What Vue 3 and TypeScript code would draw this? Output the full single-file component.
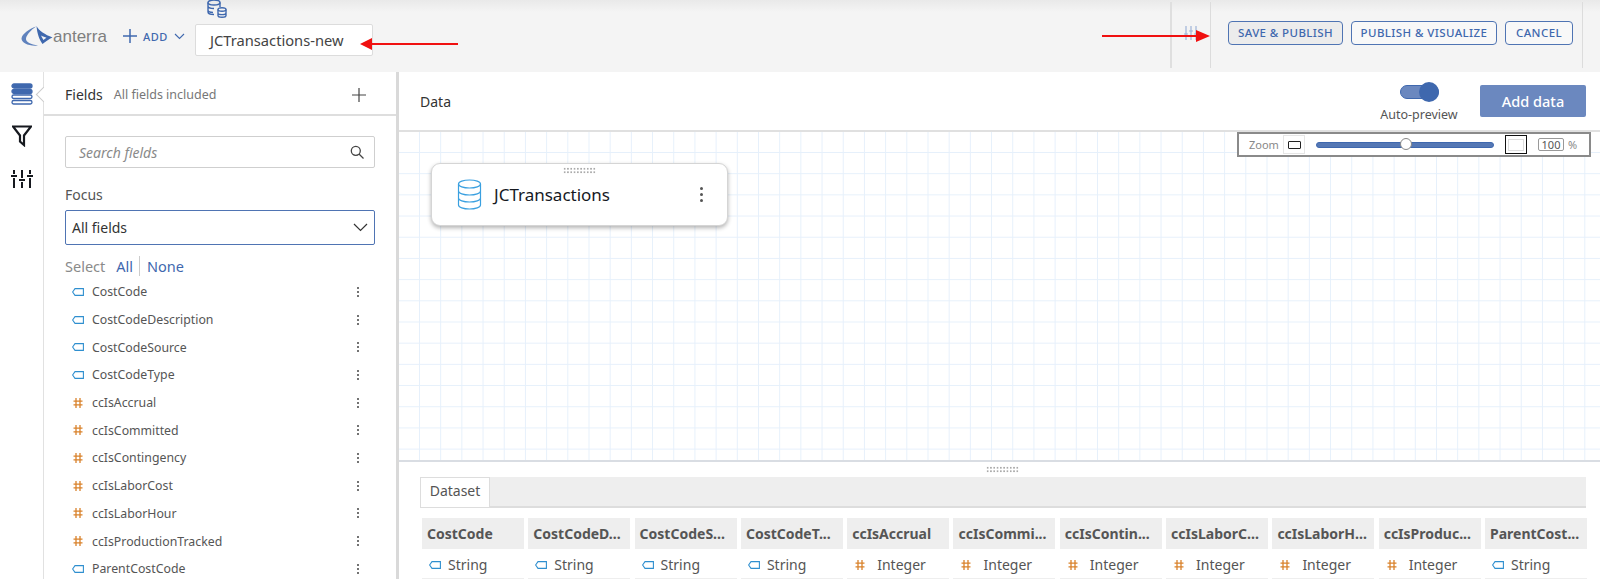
<script setup lang="ts">
interface Field { name: string; kind: 'text' | 'num' }
interface Col { head: string; kind: 'text' | 'num' }

const fields: Field[] = [
  { name: 'CostCode', kind: 'text' },
  { name: 'CostCodeDescription', kind: 'text' },
  { name: 'CostCodeSource', kind: 'text' },
  { name: 'CostCodeType', kind: 'text' },
  { name: 'ccIsAccrual', kind: 'num' },
  { name: 'ccIsCommitted', kind: 'num' },
  { name: 'ccIsContingency', kind: 'num' },
  { name: 'ccIsLaborCost', kind: 'num' },
  { name: 'ccIsLaborHour', kind: 'num' },
  { name: 'ccIsProductionTracked', kind: 'num' },
  { name: 'ParentCostCode', kind: 'text' }
]
const cols: Col[] = [
  { head: 'CostCode', kind: 'text' },
  { head: 'CostCodeD...', kind: 'text' },
  { head: 'CostCodeS...', kind: 'text' },
  { head: 'CostCodeT...', kind: 'text' },
  { head: 'ccIsAccrual', kind: 'num' },
  { head: 'ccIsCommi...', kind: 'num' },
  { head: 'ccIsContin...', kind: 'num' },
  { head: 'ccIsLaborC...', kind: 'num' },
  { head: 'ccIsLaborH...', kind: 'num' },
  { head: 'ccIsProduc...', kind: 'num' },
  { head: 'ParentCost...', kind: 'text' }
]
</script>

<template>
  <div class="app">
    <header class="top">
      <div class="logo">
        <svg width="32" height="21" viewBox="0 0 32 21">
          <path d="M15 .5 C8 3 1 8 .5 12.500 C.5 17 8 20.500 17 19.500 C10 18.500 4.500 16 5 12.500 C5.500 9 10 4 15 .5Z" fill="#5f82bd" />
          <path d="M15.500 0 C18 5 24 8.500 31.500 11.500 C28 13 24.500 15.500 21.500 18 C18.500 14 16 7 15.500 0Z" fill="#3f68ae" />
          <path d="M20 9.500 C22 10.500 24 11.200 25.500 11.700 C24.500 12.300 23.500 13 22.500 14 C21.500 12.700 20.700 11 20 9.500Z" fill="#f4f4f4" />
        </svg>
        <span class="logo-text">anterra</span>
      </div>
      <div class="add">
        <svg width="16" height="16" viewBox="0 0 16 16"><path d="M8 1v14M1 8h14" stroke="#3f68ae" stroke-width="1.500" fill="none" /></svg>
        <span>ADD</span>
        <svg width="11" height="7" viewBox="0 0 11 7"><path d="M1 1l4.500 4.500L10 1" stroke="#3f68ae" stroke-width="1.100" fill="none" /></svg>
      </div>
      <div class="name-wrap">
        <svg class="name-db" width="20" height="18" viewBox="0 0 20 18" fill="none" stroke="#3f68ae" stroke-width="1.400">
          <ellipse cx="7" cy="2.500" rx="6" ry="2.500" />
          <path d="M1 2.500v9.500c0 1.300 2.500 2.500 6 2.500M13 2.500V7M1 6c0 1.300 2.500 2.500 6 2.500M1 10c0 1.300 2.500 2.400 5 2.500" />
          <ellipse cx="15" cy="9.500" rx="4" ry="1.800" />
          <path d="M11 9.500v6c0 1 1.800 1.800 4 1.800s4-.8 4-1.800v-6M11 13c0 1 1.800 1.600 4 1.600s4-.6 4-1.600" />
        </svg>
        <div class="name-input">JCTransactions-new</div>
      </div>
      <div class="arrow arrow-left"></div>
      <div class="spacer"></div>
      <div class="arrow arrow-right"></div>
      <div class="tool-slot">
        <svg width="14" height="14" viewBox="0 0 14 14" stroke="#9db3d8" stroke-width="1.200" fill="none">
          <path d="M2 0v14M7 0v14M12 0v14M0 8h4M5 5h4M10 8h4" />
        </svg>
      </div>
      <div class="actions">
        <button class="btn save pressed">SAVE &amp; PUBLISH</button>
        <button class="btn visualize">PUBLISH &amp; VISUALIZE</button>
        <button class="btn cancel">CANCEL</button>
      </div>
    </header>

    <div class="body">
      <nav class="rail">
        <svg width="22" height="22" viewBox="0 0 22 22" fill="none" stroke="#3f68ae" stroke-width="1.300">
          <rect x="1" y="1" width="20" height="4" rx="2" fill="#3f68ae" />
          <rect x="1" y="6.500" width="20" height="4" rx="2" fill="#3f68ae" />
          <rect x="1" y="12" width="20" height="3.500" rx="1.700" />
          <rect x="1" y="17.500" width="20" height="3.500" rx="1.700" />
        </svg>
        <svg class="rail-filter" width="20" height="22" viewBox="0 0 20 22" fill="none" stroke="#16191f" stroke-width="2.200">
          <path d="M1 1.500h18l-7 9V20l-4-3.500v-6z" />
        </svg>
        <svg class="rail-sliders" width="22" height="20" viewBox="0 0 22 20" fill="none" stroke="#16191f" stroke-width="2">
          <path d="M3 1v4M3 9v10M11 1v8M11 13v6M19 1v4M19 9v10M0 7h6M8 11h6M16 7h6" />
        </svg>
      </nav>

      <aside class="panel">
        <span class="notch"></span>
        <div class="panel-head">
          <span class="panel-title">Fields</span>
          <span class="panel-sub">All fields included</span>
          <svg class="panel-plus" width="14" height="14" viewBox="0 0 14 14"><path d="M7 0v14M0 7h14" stroke="#444" stroke-width="1.200" /></svg>
        </div>
        <div class="panel-body">
          <div class="search">
            <span>Search fields</span>
            <svg width="14" height="14" viewBox="0 0 14 14" fill="none" stroke="#444" stroke-width="1.300"><circle cx="5.800" cy="5.800" r="4.500" /><path d="M9 9l4.500 4.500" /></svg>
          </div>
          <div class="focus-label">Focus</div>
          <div class="select">
            <span>All fields</span>
            <svg width="15" height="9" viewBox="0 0 15 9" fill="none" stroke="#333" stroke-width="1.200"><path d="M1 1l6.500 6.500L14 1" /></svg>
          </div>
          <div class="pick">
            <span class="pick-label">Select</span>
            <span class="pick-link first">All</span>
            <span class="pick-link">None</span>
          </div>
          <ul class="field-list">
            <li v-for="f in fields" :key="f.name" class="field">
              <svg v-if="f.kind === 'text'" class="ico" width="12" height="8" viewBox="0 0 12 8" fill="none" stroke="#2f8fcf" stroke-width="1.100"><path d="M3 .6h8.400v6.800H3L.6 4z" /></svg>
              <svg v-else class="ico" width="12" height="10" viewBox="0 0 12 10" fill="none" stroke="#d9822b" stroke-width="1.300"><path d="M4 0v10M8 0v10M1.500 3.200h9M1.500 6.800h9" /></svg>
              <span class="field-name">{{ f.name }}</span>
              <span class="kebab"><i></i><i></i><i></i></span>
            </li>
          </ul>
        </div>
      </aside>

      <main class="main">
        <div class="data-bar">
          <span class="data-title">Data</span>
          <div class="preview">
            <div class="toggle"><span class="knob"></span></div>
            <span class="preview-label">Auto-preview</span>
          </div>
          <button class="add-data">Add data</button>
        </div>

        <section class="canvas">
          <div class="zoom-box">
            <span class="zoom-label">Zoom</span>
            <span class="zoom-small"><i></i></span>
            <span class="slider"><span class="slider-knob"></span></span>
            <span class="zoom-big"><i></i></span>
            <span class="zoom-num">100</span>
            <span class="zoom-pct">%</span>
          </div>
          <div class="node">
            <span class="grip"></span>
            <svg width="25" height="31" viewBox="0 0 25 31" fill="none" stroke="#3aa0e0" stroke-width="1.200">
              <ellipse cx="12.500" cy="5" rx="11" ry="4" />
              <path d="M1.500 5v21c0 2.200 5 4 11 4s11-1.800 11-4V5M1.500 12c0 2.200 5 4 11 4s11-1.800 11-4M1.500 19c0 2.200 5 4 11 4s11-1.800 11-4" />
            </svg>
            <span class="node-name">JCTransactions</span>
            <span class="kebab big"><i></i><i></i><i></i></span>
          </div>
        </section>

        <section class="dock">
          <span class="dock-grip"></span>
          <div class="tabs"><span class="tab">Dataset</span></div>
          <div class="table">
            <div v-for="c in cols" :key="c.head" class="col">
              <div class="col-head">{{ c.head }}</div>
              <div class="col-type">
                <svg v-if="c.kind === 'text'" width="12" height="8" viewBox="0 0 12 8" fill="none" stroke="#2f8fcf" stroke-width="1.100"><path d="M3 .6h8.400v6.800H3L.6 4z" /></svg>
                <svg v-else class="hash" width="12" height="10" viewBox="0 0 12 10" fill="none" stroke="#d9822b" stroke-width="1.300"><path d="M4 0v10M8 0v10M1.500 3.200h9M1.500 6.800h9" /></svg>
                <span>{{ c.kind === 'text' ? 'String' : 'Integer' }}</span>
              </div>
              <div class="col-next"></div>
            </div>
          </div>
        </section>
      </main>
    </div>
  </div>
</template>

<style>
html, body { margin: 0; overflow: hidden; background: #fff; }
</style>

<style scoped>
.app {
  width: 1600px;
  height: 579px;
  overflow: hidden;
  display: flex;
  flex-direction: column;
  font-family: "Noto Sans", "Open Sans", sans-serif;
  color: #444;
}
.top {
  height: 72px;
  flex: none;
  display: flex;
  align-items: center;
  position: relative;
  background: linear-gradient(#e9e9e9 0, #f4f4f4 12px);
}
.logo { display: flex; align-items: center; margin-left: 21px; width: 87px; }
.logo svg { flex: none; margin-top: 1px; }
.logo-text {
  font-family: "Liberation Sans", sans-serif;
  font-size: 17px;
  color: #7f7f7f;
  margin-top: 1px;
}
.add {
  display: flex;
  align-items: center;
  margin-left: 14px;
  width: 72px;
  color: #3f68ae;
  font-size: 11px;
  font-weight: 500;
  letter-spacing: .5px;
}
.add span { margin-left: 5px; margin-right: 6px; }
.name-wrap { position: relative; margin-left: 1px; margin-top: 8px; }
.name-db { position: absolute; left: 12px; top: -24px; }
.name-input {
  width: 162px;
  height: 30px;
  padding: 0 0 0 14px;
  background: #fff;
  border: 1px solid #dcdcdc;
  border-radius: 2px;
  line-height: 30px;
  font-size: 14.700px;
  color: #444;
  white-space: nowrap;
}
.arrow { position: absolute; height: 2px; background: #f01010; }
.arrow::after {
  content: "";
  position: absolute;
  top: -5.500px;
  border-top: 6.500px solid transparent;
  border-bottom: 6.500px solid transparent;
}
.arrow-left { left: 366px; top: 43px; width: 92px; }
.arrow-left::after { left: -6px; border-right: 12px solid #f01010; }
.arrow-right { left: 1102px; top: 35px; width: 100px; z-index: 2; }
.arrow-right::after { right: -8px; border-left: 14px solid #f01010; }
.spacer { flex: 1; }
.tool-slot {
  width: 41px;
  height: 66px;
  display: flex;
  align-items: center;
  justify-content: center;
  padding-bottom: 5px;
  box-sizing: border-box;
  border-left: 2px solid #dfdfdf;
  border-right: 1px solid #dcdcdc;
  margin-top: 2px;
  margin-bottom: 4px;
}
.actions {
  display: flex;
  gap: 8px;
  align-items: center;
  height: 66px;
  padding: 0 9px 5px 17px;
  margin-right: 17px;
  border-right: 1px solid #dcdcdc;
  margin-top: 2px;
  margin-bottom: 4px;
  box-sizing: border-box;
}
.btn {
  height: 24px;
  padding: 0;
  background: #f8f8f8;
  border: 1px solid #4f74b3;
  border-radius: 4px;
  font-family: inherit;
  font-size: 11.500px;
  font-weight: 500;
  letter-spacing: .4px;
  color: #3f68ae;
  white-space: nowrap;
}
.btn.save { width: 115px; }
.btn.visualize { width: 146px; }
.btn.cancel { width: 68px; }
.btn.pressed { background: #ececec; }

.body { flex: 1; display: flex; min-height: 0; }
.rail {
  width: 43px;
  flex: none;
  display: flex;
  flex-direction: column;
  align-items: center;
  padding-top: 11px;
  box-sizing: border-box;
}
.rail-filter { margin-top: 20px; }
.rail-sliders { margin-top: 22px; }
.panel {
  width: 352px;
  flex: none;
  position: relative;
  border-left: 1px solid #e1e1e1;
  border-right: 3px solid #d9d9d9;
}
.notch {
  position: absolute;
  left: -6px;
  top: 17px;
  width: 10px;
  height: 10px;
  background: #fff;
  border-left: 1px solid #ccc;
  border-bottom: 1px solid #ccc;
  transform: rotate(45deg);
}
.panel-head {
  height: 39px;
  display: flex;
  align-items: center;
  padding: 3px 30px 0 21px;
  border-bottom: 2px solid #dedede;
}
.panel-title { font-size: 14px; font-weight: 400; color: #333; }
.panel-sub { font-size: 12.500px; color: #777; margin-left: 11px; }
.panel-plus { margin-left: auto; margin-top: 1px; }
.panel-body { padding: 20px 21px 0; }
.search {
  height: 30px;
  border: 1px solid #cfcfcf;
  border-radius: 2px;
  display: flex;
  align-items: center;
  justify-content: space-between;
  padding: 0 10px 0 13px;
  font-style: italic;
  font-size: 14px;
  color: #8a8a8a;
}
.focus-label { font-size: 14px; color: #555; line-height: 19px; margin-top: 17px; }
.select {
  height: 33px;
  margin-top: 6px;
  border: 1px solid #4f74b3;
  border-radius: 2px;
  display: flex;
  align-items: center;
  justify-content: space-between;
  padding: 0 6px;
  font-size: 14px;
  color: #333;
}
.pick { display: flex; align-items: center; font-size: 14.500px; height: 20px; margin-top: 11px; }
.pick-label { color: #8a8a8a; margin-right: 11px; }
.pick-link { color: #3f68ae; }
.pick-link.first { padding-right: 6px; border-right: 1px solid #ccc; margin-right: 7px; }
.field-list { list-style: none; margin: 2px 0 0; padding: 0; }
.field { height: 27.700px; display: flex; align-items: center; font-size: 12.300px; color: #555; }
.ico { margin-left: 6.500px; flex: none; }
.field-name { margin-left: 8.500px; }
.kebab { display: flex; flex-direction: column; gap: 2px; margin-left: auto; margin-right: 16px; }
.kebab i { display: block; width: 2px; height: 2px; border-radius: 50%; background: #444; }
.kebab.big { gap: 3px; margin-right: 24px; }
.kebab.big i { width: 3px; height: 3px; background: #555; }

.main { flex: 1; min-width: 0; display: flex; flex-direction: column; }
.data-bar {
  height: 60px;
  flex: none;
  box-sizing: border-box;
  display: flex;
  align-items: center;
  border-bottom: 2px solid #e0e0e0;
  padding: 0 14px 0 21px;
}
.data-title { font-size: 14px; font-weight: 400; color: #333; margin-top: 1px; }
.preview {
  margin-left: auto;
  display: flex;
  flex-direction: column;
  align-items: center;
  width: 82px;
  margin-top: 3px;
}
.toggle {
  width: 39px;
  height: 14px;
  border: 1px solid #3f68ae;
  box-sizing: border-box;
  border-radius: 7px;
  background: #6b88bf;
  position: relative;
  margin-top: 3px;
  margin-bottom: 4px;
}
.knob {
  position: absolute;
  right: -1px;
  top: -4px;
  width: 20px;
  height: 20px;
  border-radius: 50%;
  background: #3f68ae;
}
.preview-label { font-size: 12.500px; color: #555; line-height: 17px; margin-top: 3px; }
.add-data {
  width: 106px;
  height: 32px;
  margin-left: 20px;
  margin-top: -1px;
  border: 0;
  border-radius: 2px;
  background: #6b88bf;
  color: #fff;
  font-family: inherit;
  font-size: 14.500px;
  font-weight: 500;
}
.canvas {
  flex: 1;
  min-height: 0;
  position: relative;
  background-color: #fff;
  background-image:
    linear-gradient(to right, #e6f0fb 1px, transparent 1px),
    linear-gradient(to bottom, #e6f0fb 1px, transparent 1px);
  background-size: 21.200px 21.200px;
  background-position: 20px 20px;
}
.zoom-box {
  position: absolute;
  left: 838px;
  top: 0;
  width: 354px;
  height: 25px;
  box-sizing: border-box;
  background: #fff;
  border: 2px solid #8a8a8a;
  display: flex;
  align-items: center;
  font-size: 11px;
  color: #888;
}
.zoom-label { margin-left: 10px; width: 33px; }
.zoom-small, .zoom-big {
  width: 22px;
  height: 19px;
  display: flex;
  align-items: center;
  justify-content: center;
  box-sizing: border-box;
  border: 1px solid #e6e6e6;
}
.zoom-small { margin-left: 1px; }
.zoom-small i { width: 11px; height: 6px; border: 1.500px solid #222; border-radius: 1px; }
.zoom-big { margin-left: 11px; border: 1.500px solid #111; }
.zoom-big i { width: 14px; height: 10px; border: 1px solid #ddd; }
.slider {
  width: 178px;
  height: 6px;
  margin-left: 11px;
  border-radius: 3px;
  background: #5578b5;
  border: 1px solid #3f68ae;
  box-sizing: border-box;
  position: relative;
}
.slider-knob {
  position: absolute;
  left: 83px;
  top: -5px;
  width: 12px;
  height: 12px;
  box-sizing: border-box;
  border-radius: 50%;
  background: #fff;
  border: 1px solid #888;
}
.zoom-num {
  margin-left: 11px;
  width: 26px;
  height: 13px;
  line-height: 12px;
  box-sizing: border-box;
  border: 1px solid #999;
  border-radius: 2px;
  text-align: center;
  color: #555;
}
.zoom-pct { margin-left: 4px; }
.node {
  position: absolute;
  left: 32px;
  top: 31px;
  width: 297px;
  height: 63px;
  box-sizing: border-box;
  display: flex;
  align-items: center;
  padding-left: 25px;
  background: #fff;
  border: 1px solid #d5d5d5;
  border-radius: 9px;
  box-shadow: 0 2px 4px rgba(0, 0, 0, .3);
}
.node-name { font-size: 17px; color: #16191f; margin-left: 12px; }
.grip, .dock-grip {
  position: absolute;
  width: 33px;
  height: 7px;
  background-image: radial-gradient(circle, #aaa 1px, transparent 1.100px);
  background-size: 3.300px 3.500px;
}
.grip { left: 131px; top: 3px; }
.dock {
  height: 119px;
  flex: none;
  box-sizing: border-box;
  position: relative;
  background: #fff;
  border-top: 2px solid #d9dde3;
  padding: 15px 14px 0 21px;
}
.dock-grip { left: 587px; top: 4px; }
.tabs { height: 29px; background: #eee; border-bottom: 2px solid #ddd; display: flex; }
.tab {
  width: 70px;
  height: 30px;
  box-sizing: border-box;
  text-align: center;
  line-height: 26px;
  font-size: 14px;
  color: #555;
  background: #fff;
  border: 1px solid #ddd;
  border-bottom: 0;
}
.table { display: flex; gap: 4.300px; margin: 10px 0 0 2px; }
.col { width: 102px; flex: none; }
.col-head {
  height: 31px;
  line-height: 31px;
  padding-left: 5px;
  background: #eee;
  font-size: 14px;
  font-weight: 700;
  color: #555;
  white-space: nowrap;
  overflow: hidden;
}
.col-type {
  height: 29px;
  box-sizing: border-box;
  padding: 2px 0 0 7px;
  display: flex;
  align-items: center;
  gap: 7px;
  font-size: 14px;
  color: #555;
}
.hash { margin-right: 4px; }
.col-next { height: 3px; background: #eee; }
</style>
